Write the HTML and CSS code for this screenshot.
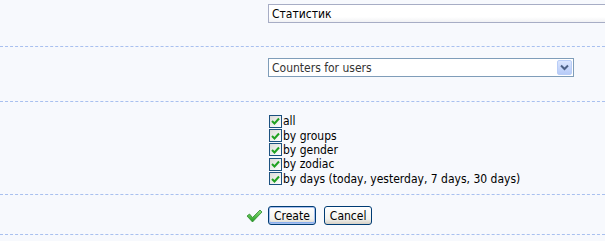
FILE: index.html
```html
<!DOCTYPE html>
<html lang="en">
<head>
  <meta charset="UTF-8">
  <title>Counter settings</title>
  <link rel="stylesheet" href="styles.css">
</head>
<body>

  <form class="settings">
    <div class="row row-name">
      <div class="label"></div>
      <div class="field clip">
        <input class="text-input" type="text" value="Статистик">
      </div>
    </div>

    <div class="row row-type">
      <div class="label"></div>
      <div class="field">
        <div class="select">
          <span class="select-value">Counters for users</span>
          <span class="select-button">
            <svg width="9" height="7" viewBox="0 0 9 7"><path d="M1 1.5 L4.5 5 L8 1.5" fill="none" stroke="#4d6185" stroke-width="2"/></svg>
          </span>
        </div>
      </div>
    </div>

    <div class="row row-options">
      <div class="label"></div>
      <div class="field">
        <label class="check"><span class="box"><svg width="9" height="8" viewBox="0 0 9 8"><path d="M1 4 L3.5 6.5 L8 1.5" fill="none" stroke="#21a121" stroke-width="2"/></svg></span>all</label>
        <label class="check"><span class="box"><svg width="9" height="8" viewBox="0 0 9 8"><path d="M1 4 L3.5 6.5 L8 1.5" fill="none" stroke="#21a121" stroke-width="2"/></svg></span>by groups</label>
        <label class="check"><span class="box"><svg width="9" height="8" viewBox="0 0 9 8"><path d="M1 4 L3.5 6.5 L8 1.5" fill="none" stroke="#21a121" stroke-width="2"/></svg></span>by gender</label>
        <label class="check"><span class="box"><svg width="9" height="8" viewBox="0 0 9 8"><path d="M1 4 L3.5 6.5 L8 1.5" fill="none" stroke="#21a121" stroke-width="2"/></svg></span>by zodiac</label>
        <label class="check"><span class="box"><svg width="9" height="8" viewBox="0 0 9 8"><path d="M1 4 L3.5 6.5 L8 1.5" fill="none" stroke="#21a121" stroke-width="2"/></svg></span>by days (today, yesterday, 7 days, 30 days)</label>
      </div>
    </div>

    <div class="row row-actions">
      <div class="label">
        <svg class="ok-icon" width="17" height="14" viewBox="0 0 17 14">
          <defs>
            <linearGradient id="okg" x1="0" y1="0" x2="0" y2="1">
              <stop offset="0" stop-color="#8fe07a"/>
              <stop offset="1" stop-color="#1f9a1f"/>
            </linearGradient>
          </defs>
          <path d="M1 7 L3.5 5 L6.5 8.5 L14 1 L16 3 L6.5 13 Z" fill="url(#okg)" stroke="#2f8a2f" stroke-width="0.8"/>
        </svg>
      </div>
      <div class="field buttons">
        <button type="button" class="btn default">Create</button>
        <button type="button" class="btn">Cancel</button>
      </div>
    </div>
  </form>

</body>
</html>
```

FILE: styles.css
```css
body {
  margin: 0;
  background: #f7f9fd;
  font-family: "DejaVu Sans Condensed", "DejaVu Sans", sans-serif;
  font-size: 12px;
  color: #000;
  overflow: hidden;
}

.settings {
  width: 100%;
}

.row {
  display: grid;
  grid-template-columns: 268px 1fr;
  border-bottom: 1px dashed #a9c0ef;
  box-sizing: border-box;
}

.row-name {
  height: 47px;
  padding-top: 4px;
}

.row-type {
  height: 55px;
  padding-top: 11px;
}

.row-options {
  height: 93px;
  padding-top: 12px;
}

.row-actions {
  height: 40px;
  padding-top: 11px;
}

.label {
  display: flex;
  justify-content: flex-end;
  padding-right: 5px;
}

.clip {
  overflow: hidden;
}

.text-input {
  display: block;
  width: calc(100% + 20px);
  height: 19px;
  box-sizing: border-box;
  margin: 0;
  padding: 0 3px;
  border: 1px solid #a7adc5;
  background: linear-gradient(#fff 70%, #f1f2f4);
  font-family: inherit;
  font-size: 12px;
  color: #000;
}

.select {
  display: flex;
  align-items: center;
  width: 306px;
  height: 19px;
  box-sizing: border-box;
  border: 1px solid #7f9db9;
  background: #fff;
  padding: 1px;
}

.select-value {
  flex: 1;
  padding-left: 2px;
  color: #333;
}

.select-button {
  display: flex;
  align-items: center;
  justify-content: center;
  width: 15px;
  height: 15px;
  border: 1px solid #b9cdf7;
  border-radius: 2px;
  background: linear-gradient(#dbe6fe, #b7cbf8);
  box-sizing: border-box;
}

.check {
  display: flex;
  align-items: center;
  height: 14.4px;
  padding-left: 1px;
}

.box {
  display: flex;
  align-items: center;
  justify-content: center;
  width: 13px;
  height: 13px;
  box-sizing: border-box;
  border: 1px solid #1c5180;
  background: linear-gradient(135deg, #dcdcd7, #fff);
  margin-right: 1px;
}

.ok-icon {
  margin-top: 3px;
}

.buttons {
  display: flex;
  gap: 8px;
  align-items: flex-start;
}

.btn {
  height: 19px;
  padding: 0 5px;
  border: 1px solid #003c74;
  border-radius: 3px;
  background: linear-gradient(#fff, #f2f2ee 70%, #d6d0c5);
  font-family: inherit;
  font-size: 12px;
  color: #000;
  cursor: pointer;
}

.btn.default {
  box-shadow: inset 0 0 0 1px #a8c0ee, inset 0 -1px 0 1px #8ab0ef;
}
```
